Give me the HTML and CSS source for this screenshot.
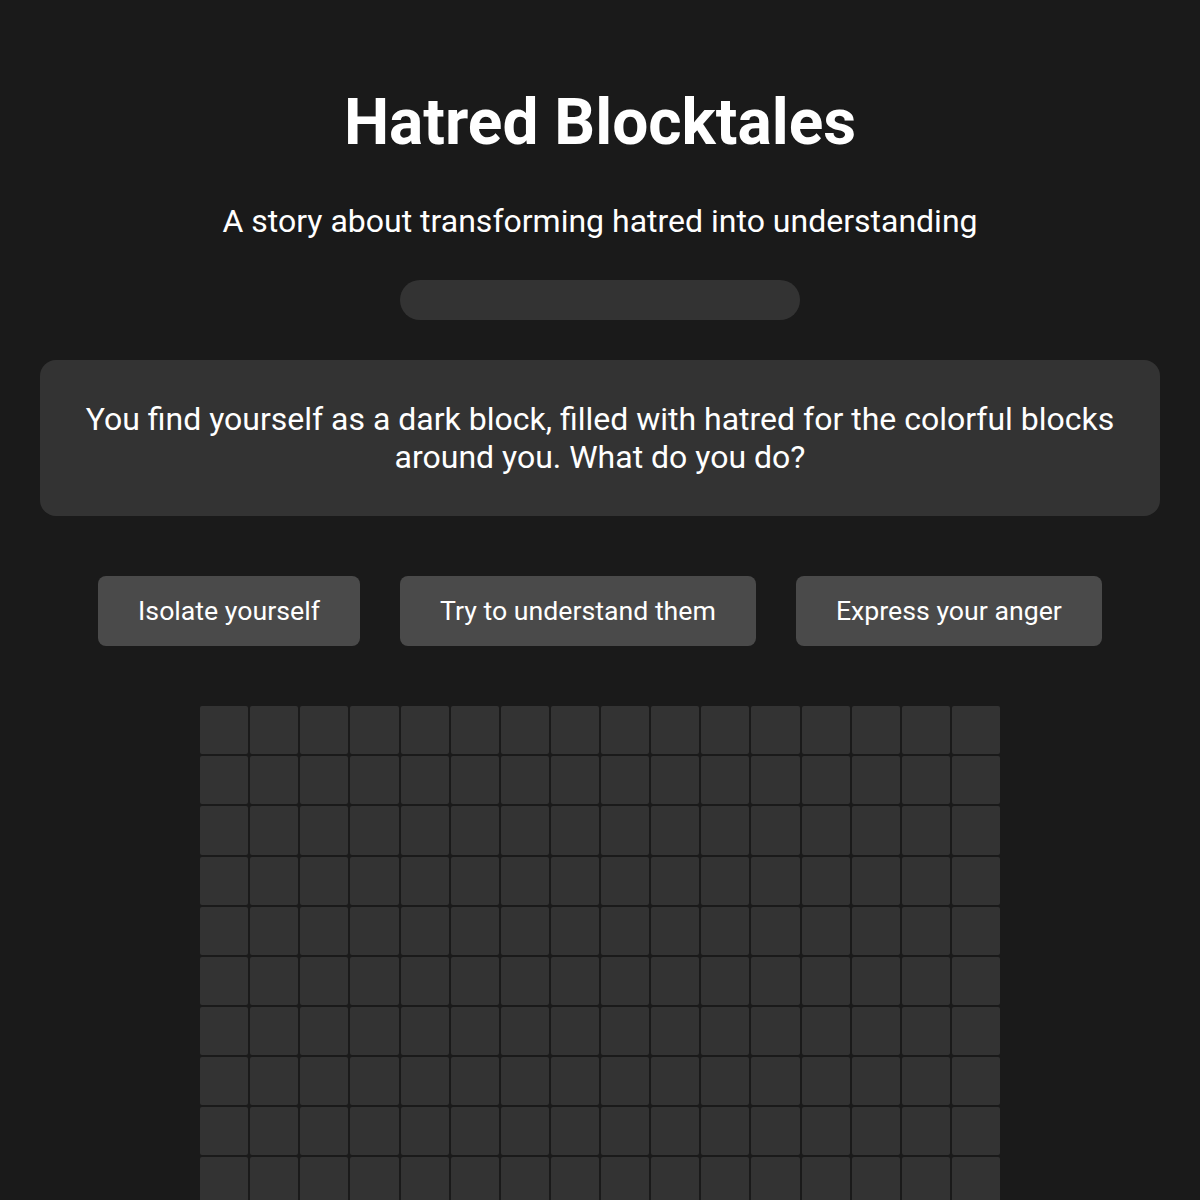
FILE: index.html
```html
<!DOCTYPE html>
<html>
<head>
<meta charset="utf-8">
<link rel="stylesheet" href="styles.css">
</head>
<body>
<div class="page">
  <h1 class="title">Hatred Blocktales</h1>
  <p class="subtitle">A story about transforming hatred into understanding</p>
  <div class="progress"><div class="progress-fill"></div></div>
  <div class="story">You find yourself as a dark block, filled with hatred for the colorful blocks around you. What do you do?</div>
  <div class="choices">
    <button class="choice">Isolate yourself</button>
    <button class="choice">Try to understand them</button>
    <button class="choice">Express your anger</button>
  </div>
  <div class="grid" id="grid"></div>
</div>
<script>
  var g = document.getElementById('grid');
  for (var i = 0; i < 16 * 12; i++) {
    var c = document.createElement('div');
    c.className = 'cell';
    g.appendChild(c);
  }
</script>
</body>
</html>
```
FILE: styles.css
```css
html, body {
  margin: 0;
  padding: 0;
  background: #1a1a1a;
  color: #ffffff;
  font-family: Roboto, "Noto Sans", sans-serif;
}
.page {
  padding: 40px;
  display: flex;
  flex-direction: column;
  align-items: center;
}
.title {
  font-size: 64px;
  font-weight: 700;
  margin: 45px 0 0 0;
  line-height: 1.2;
}
.subtitle {
  font-size: 32px;
  margin: 40px 0 0 0;
  line-height: 1.2;
}
.progress {
  width: 400px;
  height: 40px;
  border-radius: 20px;
  background: #333333;
  margin-top: 40px;
  overflow: hidden;
}
.progress-fill {
  width: 0;
  height: 100%;
  background: #3a3a3a;
}
.story {
  align-self: stretch;
  background: #333333;
  border-radius: 16px;
  padding: 40px;
  margin-top: 40px;
  font-size: 32px;
  line-height: 38px;
  text-align: center;
}
.choices {
  display: flex;
  gap: 40px;
  margin-top: 60px;
}
.choice {
  font-family: Roboto, "Noto Sans", sans-serif;
  background: #4a4a4a;
  color: #ffffff;
  border: none;
  border-radius: 8px;
  font-size: 26.7px;
  padding: 19px 40px;
  line-height: 32px;
}
.grid {
  margin-top: 60px;
  width: 800px;
  display: grid;
  grid-template-columns: repeat(16, 1fr);
  gap: 2px;
}
.cell {
  background: #333333;
  border-radius: 2px;
  aspect-ratio: 1;
}
```
